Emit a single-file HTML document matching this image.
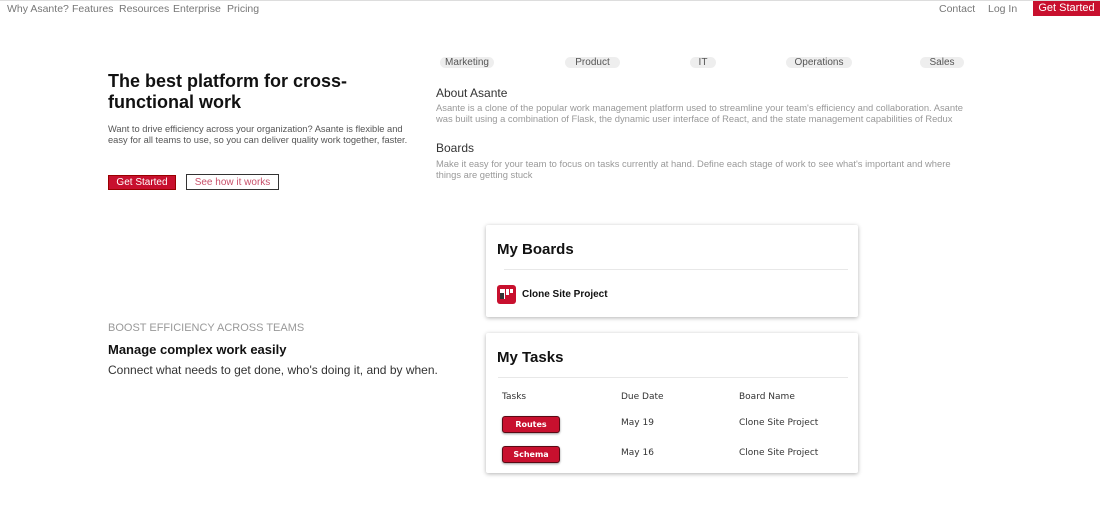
<!DOCTYPE html>
<html><head><meta charset="utf-8"><style>
*{box-sizing:border-box;margin:0;padding:0}
body{width:1100px;height:530px;background:#fff;font-family:"Liberation Sans",sans-serif;position:relative;overflow:hidden}
.a{position:absolute;white-space:nowrap}
.nav{font-family:"Liberation Sans",sans-serif;font-size:10.5px;color:#777;top:3px}
.pill{top:57px;height:11px;background:#eee;border-radius:6px;font-size:10px;color:#555;text-align:center;line-height:11px}
.card{position:absolute;left:486px;width:372px;background:#fff;box-shadow:0 1px 4px rgba(0,0,0,.3);border-radius:2px;font-family:"DejaVu Sans",sans-serif}
.card h2{position:absolute;left:11px;font-size:14px;font-weight:bold;color:#111;font-family:"Liberation Sans",sans-serif;font-size:15px}
.card .hr{position:absolute;left:12px;right:10px;height:1px;background:#e8e8e8}
.t{position:absolute;font-size:9px;color:#333}
.btn{position:absolute;left:16px;width:58px;height:17px;background:#c8102e;border:1px solid #5a0a14;border-radius:3px;color:#fff;font-size:8px;font-weight:bold;text-align:center;line-height:15px;box-shadow:0 1px 2px rgba(0,0,0,.4)}
</style></head><body>
<div style="position:absolute;left:0;top:0;width:1100px;height:1px;background:#ddd"></div>
<div class="a nav" style="left:7px">Why Asante?</div>
<div class="a nav" style="left:72px">Features</div>
<div class="a nav" style="left:119px">Resources</div>
<div class="a nav" style="left:173px">Enterprise</div>
<div class="a nav" style="left:227px">Pricing</div>
<div class="a nav" style="left:939px">Contact</div>
<div class="a nav" style="left:988px">Log In</div>
<div class="a" style="left:1033px;top:1px;width:67px;height:15px;background:#c8102e;color:#fff;font-size:11px;text-align:center;line-height:15px">Get Started</div>

<div class="a" style="left:108px;top:71px;font-size:18px;font-weight:bold;color:#111;line-height:21px;white-space:normal;width:270px">The best platform for cross-functional work</div>
<div class="a" style="left:108px;top:124px;font-size:9.3px;color:#555;line-height:11px;white-space:normal;width:300px">Want to drive efficiency across your organization? Asante is flexible and easy for all teams to use, so you can deliver quality work together, faster.</div>
<div class="a" style="left:108px;top:175px;width:68px;height:15px;background:#c8102e;color:#fff;font-size:10px;text-align:center;line-height:14px;border:1px solid #900">Get Started</div>
<div class="a" style="left:186px;top:174px;width:93px;height:16px;border:1px solid #333;color:#c8506a;font-size:10px;text-align:center;line-height:15px">See how it works</div>

<div class="a pill" style="left:440px;width:54px;top:57px">Marketing</div>
<div class="a pill" style="left:565px;width:55px;top:57px">Product</div>
<div class="a pill" style="left:690px;width:26px;top:57px">IT</div>
<div class="a pill" style="left:786px;width:66px;top:57px">Operations</div>
<div class="a pill" style="left:920px;width:44px;top:57px">Sales</div>

<div class="a" style="left:436px;top:86px;font-size:12px;color:#333">About Asante</div>
<div class="a" style="left:436px;top:102px;font-size:9.4px;color:#999;line-height:11px;white-space:normal;width:530px">Asante is a clone of the popular work management platform used to streamline your team's efficiency and collaboration. Asante was built using a combination of Flask, the dynamic user interface of React, and the state management capabilities of Redux</div>
<div class="a" style="left:436px;top:141px;font-size:12px;color:#333">Boards</div>
<div class="a" style="left:436px;top:158px;font-size:9.4px;color:#999;line-height:11px;white-space:normal;width:530px">Make it easy for your team to focus on tasks currently at hand. Define each stage of work to see what's important and where things are getting stuck</div>

<div class="a" style="left:108px;top:322px;font-size:11px;color:#999">BOOST EFFICIENCY ACROSS TEAMS</div>
<div class="a" style="left:108px;top:342px;font-size:13px;font-weight:bold;color:#111">Manage complex work easily</div>
<div class="a" style="left:108px;top:363px;font-size:12px;color:#333">Connect what needs to get done, who's doing it, and by when.</div>

<div class="card" style="top:225px;height:92px">
<h2 style="top:16px">My Boards</h2>
<div class="hr" style="top:44px;left:18px"></div>
<div style="position:absolute;left:11px;top:60px;width:19px;height:19px;background:#c8102e;border-radius:3px">
<div style="position:absolute;left:3px;top:4px;width:5px;height:10px;background:#fff"></div>
<div style="position:absolute;left:3px;top:8px;width:4px;height:6px;background:#333"></div>
<div style="position:absolute;left:9px;top:4px;width:3px;height:6px;background:#fff"></div>
<div style="position:absolute;left:13px;top:4px;width:3px;height:4px;background:#fff"></div>
</div>
<div class="t" style="left:36px;top:64px;font-weight:bold;color:#111;font-family:'Liberation Sans',sans-serif;font-size:10px">Clone Site Project</div>
</div>

<div class="card" style="top:333px;height:140px">
<h2 style="top:16px">My Tasks</h2>
<div class="hr" style="top:44px"></div>
<div class="t" style="left:16px;top:59px">Tasks</div>
<div class="t" style="left:135px;top:59px">Due Date</div>
<div class="t" style="left:253px;top:59px">Board Name</div>
<div class="btn" style="top:83px">Routes</div>
<div class="t" style="left:135px;top:85px">May 19</div>
<div class="t" style="left:253px;top:85px">Clone Site Project</div>
<div class="btn" style="top:113px">Schema</div>
<div class="t" style="left:135px;top:115px">May 16</div>
<div class="t" style="left:253px;top:115px">Clone Site Project</div>
</div>
</body></html>
